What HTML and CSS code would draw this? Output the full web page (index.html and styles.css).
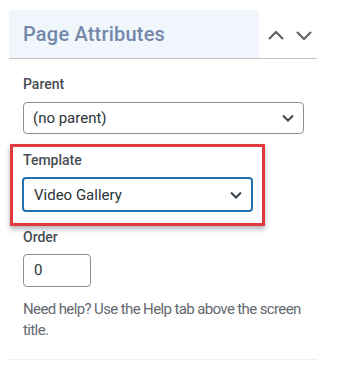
FILE: index.html
```html
<!DOCTYPE html>
<html>
<head>
<meta charset="utf-8">
<link rel="stylesheet" href="styles.css">
</head>
<body>
<div class="panel">
  <div class="header">
    <div class="title-box"><h2 class="title">Page Attributes</h2></div>
    <div class="arrows">
      <svg class="arrow" width="18" height="12" viewBox="0 0 18 12"><polyline points="2,10 9,3 16,10" fill="none" stroke="#5f6368" stroke-width="2.2"/></svg>
      <svg class="arrow" width="18" height="12" viewBox="0 0 18 12"><polyline points="2,3 9,10 16,3" fill="none" stroke="#5f6368" stroke-width="2.2"/></svg>
    </div>
  </div>
  <div class="content">
    <div class="label">Parent</div>
    <div class="select wide">
      <span>(no parent)</span>
      <svg width="14" height="10" viewBox="0 0 14 10"><polyline points="2,2.5 7,7.5 12,2.5" fill="none" stroke="#3c434a" stroke-width="2"/></svg>
    </div>
    <div class="highlight">
      <div class="label">Template</div>
      <div class="select focused">
        <span>Video Gallery</span>
        <svg width="14" height="10" viewBox="0 0 14 10"><polyline points="2,2.5 7,7.5 12,2.5" fill="none" stroke="#3c434a" stroke-width="2"/></svg>
      </div>
    </div>
    <div class="label order-label">Order</div>
    <div class="input">0</div>
    <p class="help">Need help? Use the Help tab above the screen title.</p>
  </div>
</div>
</body>
</html>
```
FILE: styles.css
```css
html, body {
  margin: 0;
  padding: 0;
  background: #ffffff;
}
body {
  font-family: Roboto, "Noto Sans", sans-serif;
}
.panel {
  margin-left: 9px;
  width: 308px;
  border-bottom: 1px solid #f0f0f1;
  padding-bottom: 0;
}
.header {
  margin-top: 10px;
  height: 48px;
  border-bottom: 1px solid #c3c4c7;
  display: flex;
  align-items: stretch;
}
.title-box {
  width: 250px;
  background: #f0f6fc;
  border-radius: 4px 4px 0 0;
  display: flex;
  align-items: center;
}
.title {
  margin: 0 0 0 14px;
  font-size: 20px;
  font-weight: 500;
  color: #7488a9;
  letter-spacing: 0.2px;
}
.arrows {
  display: flex;
  align-items: center;
  gap: 10px;
  padding-left: 8px;
  padding-top: 2px;
}
.content {
  padding-left: 14px;
}
.label {
  margin-top: 15px;
  font-size: 14px;
  line-height: 20px;
  font-weight: 500;
  color: #474d54;
}
.select {
  box-sizing: border-box;
  margin-top: 8px;
  height: 32px;
  border: 1px solid #8c8f94;
  border-radius: 4px;
  display: flex;
  align-items: center;
  justify-content: space-between;
  padding: 0 8px 0 9px;
  font-size: 15px;
  color: #2c3338;
}
.select.wide {
  width: 281px;
}
.highlight {
  box-sizing: border-box;
  margin-top: 10px;
  margin-left: -13px;
  width: 255px;
  border: 3px solid #e0393e;
  padding: 3px 9px 11px 9px;
  box-shadow: 0 3px 5px rgba(0, 0, 0, 0.3);
}
.highlight .label {
  margin-top: 0;
  padding-left: 1px;
}
.select.focused {
  margin-top: 7px;
  height: 35px;
  border: 2px solid #2271b1;
  padding: 0 8px 0 10px;
}
.order-label {
  margin-top: 1px;
}
.input {
  box-sizing: border-box;
  margin-top: 7px;
  width: 68px;
  height: 33px;
  border: 1px solid #8c8f94;
  border-radius: 4px;
  padding-left: 10px;
  font-size: 15px;
  line-height: 31px;
  color: #2c3338;
}
.help {
  margin: 12px 0 0 0;
  padding-bottom: 18px;
  width: 290px;
  font-size: 15px;
  letter-spacing: -0.62px;
  line-height: 21px;
  color: #646970;
}
```
